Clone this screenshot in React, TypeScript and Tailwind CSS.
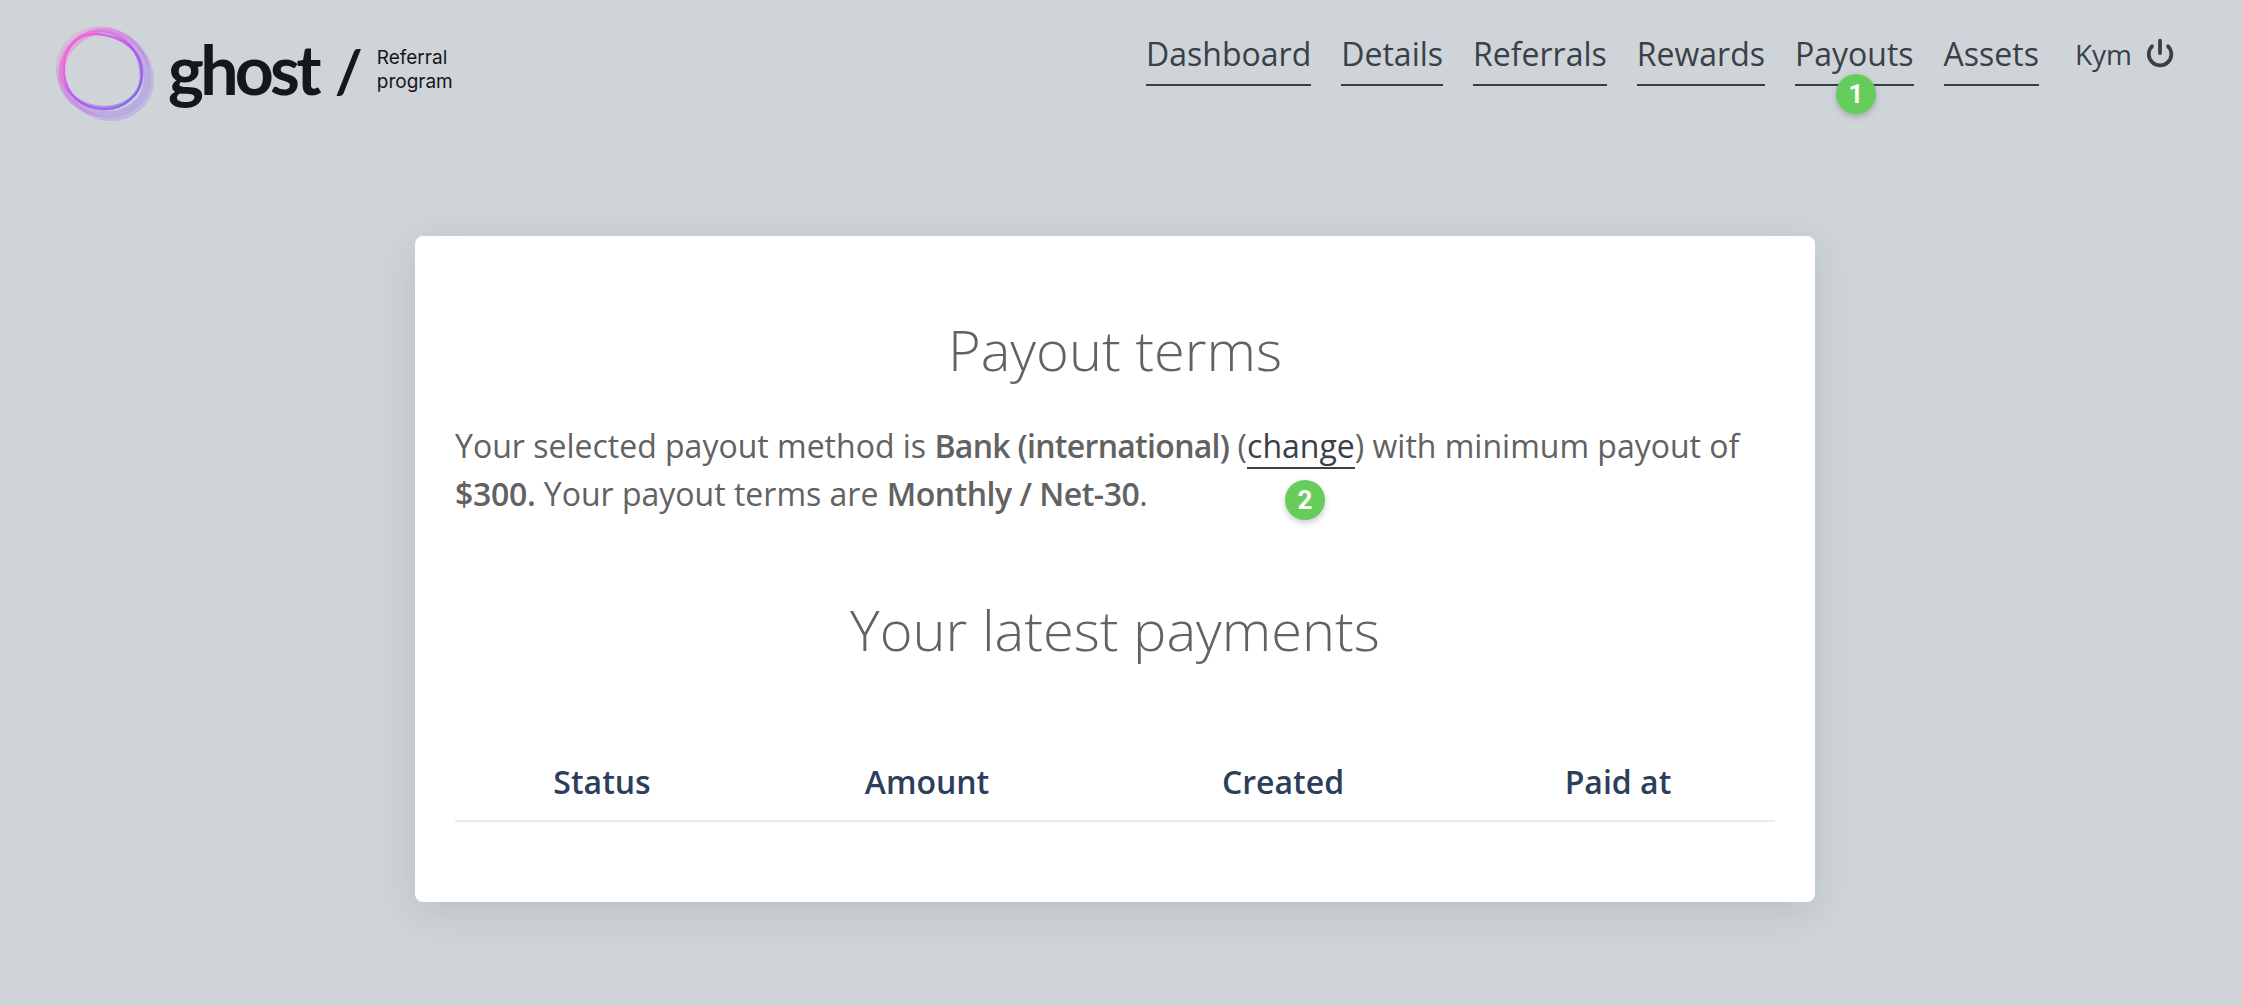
import { Power } from "lucide-react";

const navItems = ["Dashboard", "Details", "Referrals", "Rewards", "Payouts", "Assets"];
const columns = [
  { label: "Status", width: "w-[294px]" },
  { label: "Amount", width: "w-[356px]" },
  { label: "Created", width: "w-[356px]" },
  { label: "Paid at", width: "w-[314px]" },
];

function Badge({ n }: { n: number }) {
  return (
    <span className="absolute flex h-10 w-10 items-center justify-center rounded-full bg-[#66cc5c] font-['Roboto',sans-serif] text-[26px] font-bold text-white shadow-[0_3px_6px_rgba(0,0,0,0.2)]">
      {n}
    </span>
  );
}

function GhostRing() {
  return (
    <svg width="100" height="96" viewBox="0 0 100 96" fill="none" className="shrink-0">
      <defs>
        <linearGradient id="ring" x1="0.05" y1="0.1" x2="0.95" y2="0.9">
          <stop offset="0%" stopColor="#fb5fd2" />
          <stop offset="50%" stopColor="#c04cf0" />
          <stop offset="100%" stopColor="#7a5cf4" />
        </linearGradient>
      </defs>
      <path d="M9 48C7 26 20 8 42 9C68 11 88 26 87 50C87 70 68 85 48 84C26 83 11 70 9 48Z" stroke="url(#ring)" strokeOpacity="0.85" strokeWidth="2.5" />
      <path d="M6 44C7 22 24 5 47 6C72 9 86 28 86 52C85 71 68 83 47 82C26 81 5 66 6 44Z" stroke="url(#ring)" strokeOpacity="0.55" strokeWidth="2.5" />
      <path d="M3 40C5 18 25 1 50 4C74 7 96 27 97 55C97 78 76 96 52 94C26 91 1 66 3 40Z" stroke="url(#ring)" strokeOpacity="0.22" strokeWidth="4" />
      <path d="M6 50C6 24 30 4 54 6C78 12 93 30 92 56C91 76 72 91 50 89C28 87 6 72 6 50Z" stroke="url(#ring)" strokeOpacity="0.32" strokeWidth="7" />
    </svg>
  );
}

export default function App() {
  return (
    <div className="min-h-[1006px] bg-[#cfd4d9] font-['Open_Sans',sans-serif]">
      <header className="flex h-[236px] items-start justify-between pl-[55px] pr-[67px]">
        <div className="mt-[25px] flex items-center">
          <GhostRing />
          <span className="mb-[8px] ml-[13px] font-['Lato',sans-serif] text-[68px] font-bold leading-none tracking-[-0.055em] text-[#15171a]">
            ghost
          </span>
          <span className="mb-[6px] ml-[17px] font-['Lato',sans-serif] text-[60px] font-bold leading-none text-[#15171a]">/</span>
          <span className="mb-[6px] ml-[14px] w-[90px] font-['Inter',sans-serif] text-[19px] leading-[24px] text-[#15171a]">
            Referral program
          </span>
        </div>
        <nav className="mt-[31px] flex items-start">
          <div className="flex gap-[30px]">
            {navItems.map((item) => (
              <a
                key={item}
                className="relative flex h-[55px] items-start justify-center border-b-2 border-[#394047] text-[32px] font-normal leading-[46px] text-[#394047]"
              >
                {item}
                {item === "Payouts" && (
                  <span className="absolute left-[41px] top-[43px]">
                    <Badge n={1} />
                  </span>
                )}
              </a>
            ))}
          </div>
          <span className="ml-[36px] text-[28px] font-normal leading-[46px] text-[#394047]">Kym</span>
          <Power className="ml-[13px] mt-[7px] h-[30px] w-[30px] text-[#394047]" strokeWidth={3} />
        </nav>
      </header>

      <main className="ml-[415px] h-[666px] w-[1400px] rounded-lg bg-white px-[40px] pt-[78px] shadow-[0_10px_40px_rgba(0,0,0,0.1)]">
        <h2 className="text-center text-[56px] font-light leading-[70px] text-[#626262]">Payout terms</h2>
        <p className="mt-[38px] text-[32px] font-normal leading-[48px] text-[#626262]">
          Your selected payout method is <strong className="font-semibold tracking-[-0.7px]">Bank (international)</strong> (
          <a className="relative border-b-2 border-[#394047] text-[#394047]">
            change
            <span className="absolute left-[38px] top-[56px]">
              <Badge n={2} />
            </span>
          </a>
          ) with minimum payout of <strong className="font-semibold tracking-[-0.3px]">$300.</strong> Your payout terms are{" "}
          <strong className="font-semibold tracking-[-0.5px]">Monthly / Net-30</strong>.
        </p>
        <h2 className="mt-[76px] text-center text-[56px] font-light leading-[70px] text-[#626262]">Your latest payments</h2>
        <table className="mt-[94px] w-full table-fixed">
          <thead>
            <tr className="border-b-2 border-[#eaeaea]">
              {columns.map((col) => (
                <th key={col.label} className={`${col.width} pb-[14px] text-center text-[32px] font-semibold leading-[48px] text-[#2c3e5c]`}>
                  {col.label}
                </th>
              ))}
            </tr>
          </thead>
        </table>
      </main>
    </div>
  );
}
